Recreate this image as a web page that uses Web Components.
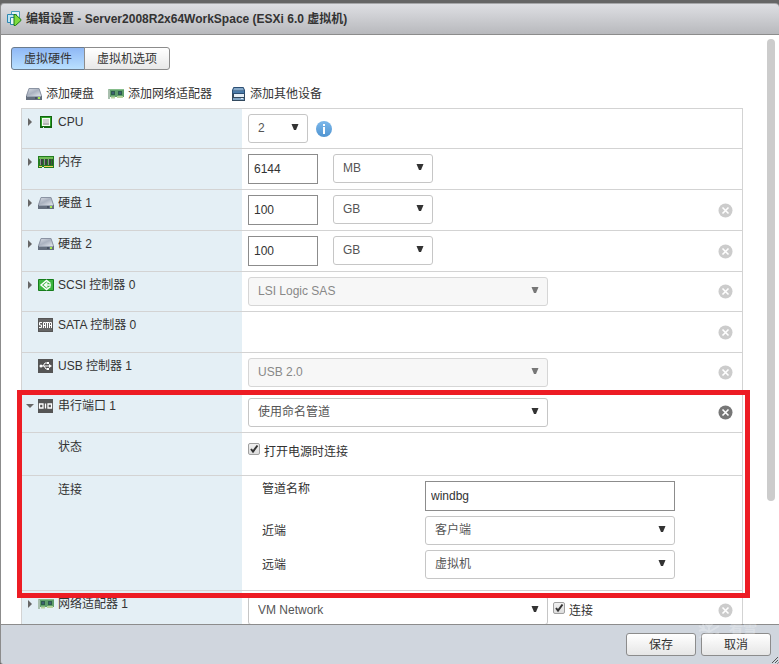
<!DOCTYPE html>
<html lang="zh-CN">
<head>
<meta charset="utf-8">
<title>编辑设置</title>
<style>
  html, body { margin: 0; height: 100%; }
  body {
    background: #666;
    color: #333;
    font: 12px/16px "Liberation Sans", "Noto Sans CJK SC", sans-serif;
    overflow: hidden;
  }
</style>
</head>
<body>
<vm-dialog>
  <vm-icon slot="icon" name="vm"></vm-icon>
  <span slot="title">编辑设置 - Server2008R2x64WorkSpace (ESXi 6.0 虚拟机)</span>

  <vm-tabs></vm-tabs>
  <vm-toolbar>
    <vm-tool icon="disk">添加硬盘</vm-tool>
    <vm-tool icon="nic">添加网络适配器</vm-tool>
    <vm-tool icon="device">添加其他设备</vm-tool>
  </vm-toolbar>

  <hw-list>
    <hw-row label="CPU" icon="cpu" toggle="closed">
      <vm-select label="CPU" value="2" size="small"></vm-select>
      <vm-icon name="info" style="margin: 7px 0 0 8px"></vm-icon>
    </hw-row>
    <hw-row label="内存" icon="memory" toggle="closed">
      <vm-amount label="内存" value="6144" unit="MB"></vm-amount>
    </hw-row>
    <hw-row label="硬盘 1" icon="disk" toggle="closed" remove="off">
      <vm-amount label="硬盘 1" value="100" unit="GB"></vm-amount>
    </hw-row>
    <hw-row label="硬盘 2" icon="disk" toggle="closed" remove="off">
      <vm-amount label="硬盘 2" value="100" unit="GB"></vm-amount>
    </hw-row>
    <hw-row label="SCSI 控制器 0" icon="scsi" toggle="closed" remove="off">
      <vm-select label="SCSI 控制器 0" value="LSI Logic SAS" size="large" disabled></vm-select>
    </hw-row>
    <hw-row label="SATA 控制器 0" icon="sata" remove="off" tall></hw-row>
    <hw-row label="USB 控制器 1" icon="usb" remove="off">
      <vm-select label="USB 控制器 1" value="USB 2.0" size="large" disabled></vm-select>
    </hw-row>
    <hw-highlight>
      <hw-row label="串行端口 1" icon="serial" toggle="open" remove="on">
        <vm-select label="串行端口 1" value="使用命名管道" size="large"></vm-select>
      </hw-row>
      <hw-row label="状态" sub>
        <vm-check label="打开电源时连接" style="margin: 3px 0 8px"></vm-check>
      </hw-row>
      <hw-row label="连接" sub>
        <pipe-form></pipe-form>
      </hw-row>
    </hw-highlight>
    <hw-row label="网络适配器 1" icon="nic" toggle="closed" remove="off">
      <vm-select label="网络适配器 1" value="VM Network" size="large"></vm-select>
      <vm-check label="连接" style="margin: 4px 0 0 5px"></vm-check>
    </hw-row>
  </hw-list>

  <vm-button slot="actions">保存</vm-button>
  <vm-button slot="actions">取消</vm-button>
</vm-dialog>

<script>
const icons = {
  vm: `<path d="M5.500 .5h8v8h-8z" fill="#e3f3fa" stroke="#4b9fbd"/><path d="M1.500 3.500h9v8h-9z" fill="#bfe3f2" stroke="#2c87b0"/><path d="M4.500 6.500h6v7h-6z" fill="#e8f7fc" stroke="#2c87b0"/><path d="M8 3.500v11h1.500L15 9.500v-1L9.500 3.500z" fill="#7fdc3e" stroke="#1c7a14" stroke-linejoin="round"/>`,
  disk: `<defs><linearGradient id="d" x2="1" y2="1"><stop stop-color="#dfe3ea"/><stop offset=".5" stop-color="#a9b1bf"/><stop offset="1" stop-color="#e4e8ee"/></linearGradient></defs><path d="M3 2h10l3 8H0z" fill="url(#d)"/><path d="M3 2.500h10l2.500 7.500M3 2.500.5 10" fill="none" stroke="#8b94a3"/><path d="M0 10h16v4H0z" fill="#66707f"/><path d="M1 10.500h14" stroke="#9aa4b2"/><path d="M12 11h2v2h-2z" fill="#a8e84e"/><path d="M9 11h2v2H9z" fill="#495363"/>`,
  nic: `<path d="M1 3h15v8H1z" fill="#5f9f6b"/><path d="M0 3h2v10H0z" fill="#a9bfae"/><path d="M3 5h4v4H3zm7 0h4v4h-4z" fill="#2d5c4c"/><path d="M4 6h2v2H4zm7 0h2v2h-2z" fill="#3f5f75"/><path d="M3 11.500h4m2-.5h6" stroke="#b7d39d" stroke-width="2"/><path d="M1 3.500h15" stroke="#86bd8b"/>`,
  device: `<path d="M7.500 1h10L19 4v4H6V4z" fill="#2c4f74"/><path d="M8 2h9l1 2.500H7z" fill="#86a9c9"/><path d="M7 5h11v2H7z" fill="#4a7aa8"/><path d="M6 8h13v7H6z" fill="#33495e"/><path d="M8 8h10v3H8z" fill="#e6eff7"/><path d="M7 12h11v2H7z" fill="#7fa3c4"/><path d="M15 12h2v1h-2z" fill="#e6eff7"/>`,
  cpu: `<path d="M2 2h12v12H6v-1H5v1H2z" fill="#12650f"/><path d="M3 3h10v9H3z" fill="#2da327"/><path d="M4 4h8v8H4z" fill="#f3fff0"/><path d="M5 5h6v6H5z" fill="#cfcfcf"/><path d="M5 9h6v2H5z" fill="#b5b5b5"/>`,
  memory: `<path d="M0 2h16v12H6v-1H4v1H0z" fill="#237d20"/><path d="M1 3h14v2H1z" fill="#70bc55"/><path d="M2 5h3v6H2zm4 0h3v6H6zm4 0h3v6h-3z" fill="#3a423e"/><path d="M14 5h1v6h-1z" fill="#3a423e"/><path d="M2.500 5v6M6.500 5v6M10.500 5v6" stroke="#8a938d"/><path d="M1 12.500h3m2 0h9" stroke="#f0cf5a"/>`,
  scsi: `<path d="M.5 2.500h15v11H.5z" fill="#3db53f" stroke="#167d1c"/><path d="M12.500 6.500 8.500 3.500 3 8l5.500 4.500 4-3" fill="none" stroke="#fff" stroke-width="1.400"/><path d="M9.500 5.500 6.500 8l3 2.500M7 8h6" fill="none" stroke="#fff" stroke-width="1.400"/>`,
  sata: `<path d="M0 1h15v14H0z" fill="#666"/><path d="M.5 1.500h14v13H.5z" fill="none" stroke="#555"/><path d="M4 5.500H1.500V8H3.500v2.500H1M5.500 11V5.500h2V11M5.500 8.500h2M8 5.500h3M9.500 5.500V11M11.500 11V5.500h2V11M11.500 8.500h2" fill="none" stroke="#fff"/>`,
  usb: `<path d="M0 1h15v14H0z" fill="#555"/><path d="M2 8h10M5 8l2-3h3M6 8l2 3h2" fill="none" stroke="#fff"/><circle cx="3" cy="8" r="1.500" fill="#fff"/><path d="M11 6l3 2-3 2zM9 4h2v2H9zM9 10h2v2H9z" fill="#fff"/>`,
  serial: `<path d="M0 1h15v14H0z" fill="#555"/><path d="M1.500 6h3.500v4H1.500zM7.500 5.500v5M10 6h3.500v4H10z" fill="none" stroke="#fff" stroke-width="1.300"/>`,
  info: `<defs><linearGradient id="i" x2="0" y2="1"><stop stop-color="#7db8ea"/><stop offset="1" stop-color="#4f94d1"/></linearGradient></defs><circle cx="8" cy="8" r="8" fill="url(#i)"/><path d="M7 3h2v2H7zM7 6h2v7H7z" fill="#fff"/>`
};

const svgIcon = name => {
  const w = name === 'device' ? 20 : 16;
  return `<svg width="${w}" height="16" viewBox="0 0 ${w} 16" aria-hidden="true">${icons[name]}</svg>`;
};

const fieldStyles = `
  .pick { display: grid; }
  .pick > * { grid-area: 1 / 1; }
  select {
    appearance: none; box-sizing: border-box; width: 100%; height: 29px; margin: 0;
    padding: 0 24px 1px 9px; border: 1px solid #c6c6c6; border-radius: 3px;
    background: #fff; color: #555; font: inherit;
  }
  .pick svg { justify-self: end; align-self: center; margin: 0 9px 3px 0; pointer-events: none; fill: #333; }
  select:disabled { background: #f7f7f7; border-color: #d6d6d6; color: #888; opacity: 1; }
  select:disabled + svg { fill: #777; }
  input[type=text] {
    box-sizing: border-box; width: 100%; height: 30px; margin: 0; padding: 0 5px;
    border: 1px solid #8c8c8c; border-radius: 0; background: #fff; color: #333; font: inherit;
  }`;

const pick = (attrs, value) => `<span class="pick"><select ${attrs}><option>${value}</option></select>
  <svg width="8" height="7" viewBox="0 0 8 7" aria-hidden="true"><path d="M.5 0h7L5 6H3z"/></svg></span>`;

const define = (name, render) => customElements.define(name, class extends HTMLElement {
  connectedCallback() {
    if (this.shadowRoot) return;
    this.attachShadow({ mode: 'open' }).innerHTML = render(this);
  }
});

define('vm-icon', el => `<style>:host { display: block; flex: none; height: 16px; } svg { display: block; }</style>${svgIcon(el.getAttribute('name'))}`);

define('vm-dialog', () => `<style>
  :host { display: flex; flex-direction: column; box-sizing: border-box; height: 100vh; padding-top: 3px; position: relative; }
  header {
    display: flex; align-items: center; gap: 4px; box-sizing: border-box; height: 32px; padding: 0 5px;
    border: solid #8c8c8c; border-width: 1px 0 1px 1px; border-top-color: #a6a7a9; border-radius: 4px 4px 0 0;
    background: linear-gradient(#dedfe3, #b8b9bd);
  }
  h1 { margin: 0; font-size: 12px; line-height: 16px; font-weight: bold; white-space: nowrap; }
  main { flex: 1; min-height: 0; display: flex; overflow: hidden; background: #fff; border-left: 1px solid #8c8c8c; }
  .content { flex: 1; min-width: 0; padding: 12px 24px 0 10px; }
  .rail { width: 8px; padding: 4px 4px 0 0; }
  .thumb { height: 79%; border-radius: 4px; background: #ccc; }
  footer {
    display: flex; justify-content: flex-end; gap: 5px; padding: 8px; background: #d0d6de;
    border: solid #8c8c8c; border-width: 1px 0 0 1px; border-radius: 0 0 0 3px;
  }
  .grip { position: absolute; right: 0; bottom: 0; }
  .mark { position: absolute; right: 22px; bottom: 20px; display: flex; align-items: flex-start; gap: 8px;
    font-size: 14px; line-height: 16px; font-weight: bold; color: #fff; opacity: .25; pointer-events: none; }
</style>
<header><slot name="icon"></slot><h1><slot name="title"></slot></h1></header>
<main><div class="content"><slot></slot></div><div class="rail"><div class="thumb"></div></div></main>
<footer><slot name="actions"></slot></footer>
<svg class="grip" width="8" height="8" viewBox="0 0 8 8" aria-hidden="true"><path d="M1 7 7 1M4 7l3-3M6.500 7.500l1-1" stroke="#555"/></svg>
<div class="mark" aria-hidden="true"><svg width="24" height="24" viewBox="0 0 24 24"><path d="M12 1v22M2 6l20 12M22 6 2 18M8 3l4 4 4-4M8 21l4-4 4 4M2 11l5-2-1-5M22 13l-5 2 1 5" fill="none" stroke="#fff" stroke-width="2"/></svg>看雪</div>`);

define('vm-tabs', () => `<style>
  :host { display: flex; }
  button {
    box-sizing: border-box; height: 23px; margin: 0; padding: 0 12px; border: 1px solid #8c8c8c;
    border-radius: 0 3px 3px 0; background: linear-gradient(#fff, #e8e8e8); color: #333; font: inherit;
  }
  button[aria-selected=true] { border-radius: 3px 0 0 3px; border-color: #6b7b8c; background: linear-gradient(#8fb8f5, #b9e0ff); }
  button + button { margin-left: -1px; }
</style><button role="tab" aria-selected="true">虚拟硬件</button><button role="tab" aria-selected="false">虚拟机选项</button>`);

define('vm-toolbar', () => `<style>:host { display: flex; gap: 14px; margin: 16px 0 6px 15px; }</style><slot></slot>`);

define('vm-tool', el => `<style>
  :host { display: block; }
  button { display: flex; gap: 4px; height: 16px; padding: 0; border: 0; background: none; color: inherit; font: inherit; white-space: nowrap; }
  svg { display: block; }
</style><button>${svgIcon(el.getAttribute('icon'))}<slot></slot></button>`);

define('vm-button', () => `<style>
  :host { display: block; }
  button { box-sizing: border-box; width: 70px; height: 23px; padding: 0; border: 1px solid #8c8c8c; border-radius: 3px;
    background: linear-gradient(#fff, #e6e6e6); color: #333; font: inherit; }
</style><button><slot></slot></button>`);

define('hw-list', () => `<style>:host { display: block; margin-left: 10px; border: solid #d3d3d3; border-width: 0 1px; }</style><slot></slot>`);

define('hw-highlight', () => `<style>
  :host { display: block; position: relative; }
  :host::after { content: ""; position: absolute; inset: -2px -8px -8px -5px; border: 5px solid #ed1c24; pointer-events: none; }
</style><slot></slot>`);

define('hw-row', el => {
  const a = n => el.getAttribute(n);
  const arrow = a('toggle') === 'open' ? 'M0 6h8L4 10z' : 'M2 4v8l4-4z';
  const toggle = a('toggle')
    ? `<button class="toggle" aria-label="展开" aria-expanded="${a('toggle') === 'open'}"><svg width="8" height="16" viewBox="0 0 8 16"><path d="${arrow}" fill="#666"/></svg></button>`
    : '<span class="toggle"></span>';
  const remove = a('remove')
    ? `<button class="remove" aria-label="移除" ${a('remove') === 'off' ? 'disabled' : ''}><svg width="15" height="15" viewBox="0 0 15 15"><circle cx="7.500" cy="7.500" r="7"/><path d="M4.500 4.500l6 6M10.500 4.500l-6 6" stroke="#fff" stroke-width="1.600"/></svg></button>` : '';
  return `<style>
    :host { display: grid; grid-template-columns: 220px 1fr auto; border-top: 1px solid #d3d3d3; }
    :host([tall]) { min-height: 40px; }
    .label { display: flex; gap: 4px; padding: 5px 4px; background: #e4eff5; }
    :host([sub]) .label { padding: 6px 4px 6px 36px; }
    .toggle { width: 8px; height: 16px; padding: 0; border: 0; background: none; }
    svg { display: block; }
    .value { display: flex; align-items: flex-start; padding: 5px 6px; min-width: 0; }
    .remove { align-self: center; margin-right: 9px; padding: 0; border: 0; background: none; fill: #777; }
    .remove:disabled { fill: #ccc; }
  </style>
  <div class="label">${el.hasAttribute('sub') ? '' : toggle + svgIcon(a('icon'))}<span>${a('label')}</span></div>
  <div class="value"><slot></slot></div>${remove}`;
});

define('vm-select', el => `<style>
  :host { display: block; width: 100px; }
  :host([size=small]) { width: 60px; }
  :host([size=large]) { width: 300px; }
  ${fieldStyles}
</style>${pick(`aria-label="${el.getAttribute('label')}" ${el.hasAttribute('disabled') ? 'disabled' : ''}`, el.getAttribute('value'))}`);

define('vm-amount', el => `<style>
  :host { display: grid; grid-template-columns: 70px 100px; gap: 15px; align-items: start; }
  ${fieldStyles}
</style><input type="text" aria-label="${el.getAttribute('label')}" value="${el.getAttribute('value')}">
${pick('aria-label="单位"', el.getAttribute('unit'))}`);

define('vm-check', el => `<style>
  :host { display: block; }
  label { display: flex; gap: 4px; line-height: 20px; padding-top: 1px; }
  input {
    appearance: none; box-sizing: border-box; flex: none; width: 12px; height: 12px; margin: 0;
    border: 1px solid #a0a0a0; border-radius: 2px; background: linear-gradient(#f0f0f0, #ddd);
  }
  .box { display: grid; height: 12px; padding-top: 1px; }
  .box > * { grid-area: 1 / 1; }
  svg { pointer-events: none; }
  path { fill: none; stroke: #333; stroke-width: 2; }
  input:not(:checked) + svg { visibility: hidden; }
</style><label><span class="box"><input type="checkbox" checked><svg width="12" height="12" viewBox="0 0 12 12" aria-hidden="true"><path d="M3 6l2 2.500L9.500 2.500"/></svg></span><span>${el.getAttribute('label')}</span></label>`);

define('pipe-form', () => `<style>
  :host { display: grid; grid-template-columns: 163px 250px; row-gap: 5px; align-items: center; padding: 0 0 6px 14px; }
  label:first-of-type { align-self: start; }
  ${fieldStyles}
</style>
<label for="name">管道名称</label><input type="text" id="name" value="windbg">
<label for="near">近端</label>${pick('id="near"', '客户端')}
<label for="far">远端</label>${pick('id="far"', '虚拟机')}`);
</script>
</body>
</html>
